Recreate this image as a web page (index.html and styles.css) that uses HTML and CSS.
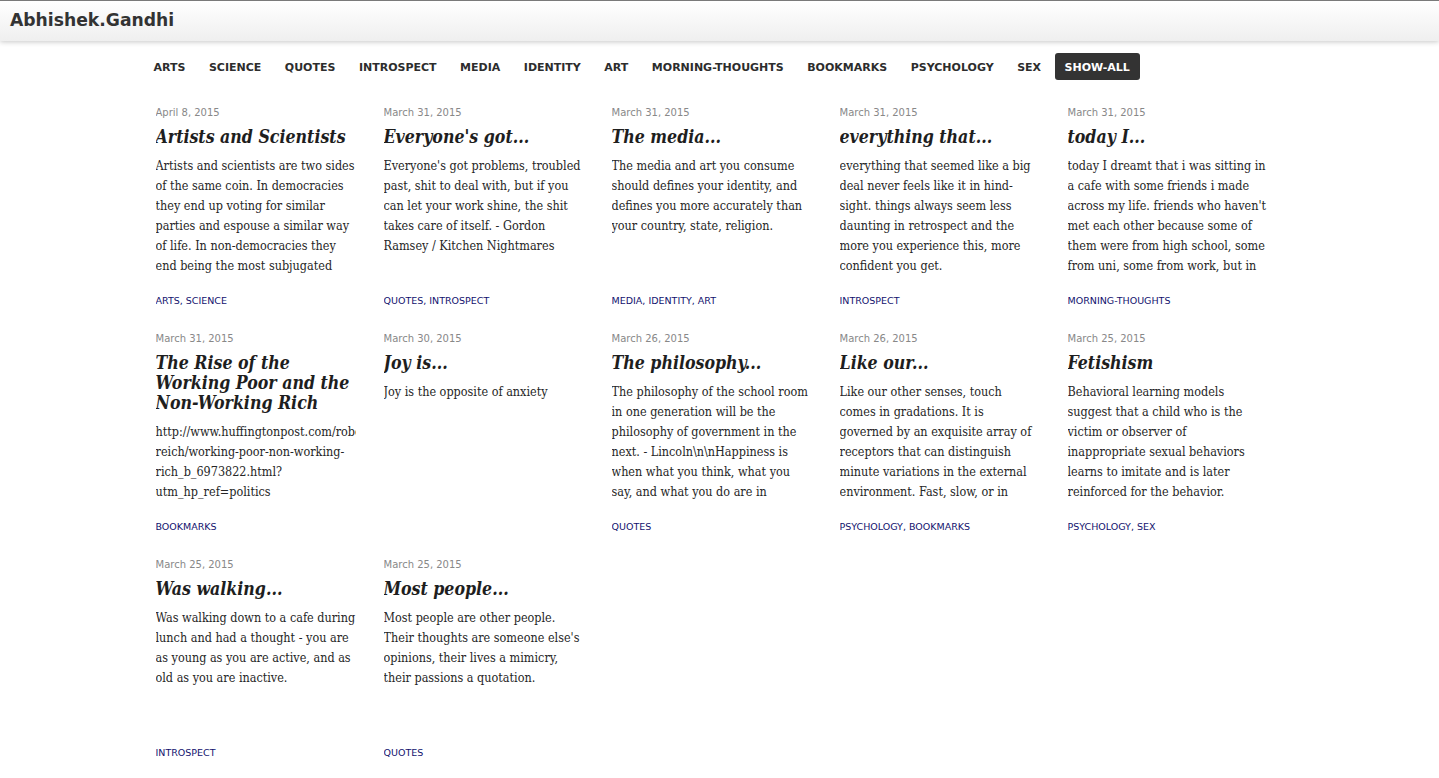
FILE: index.html
```html
<!DOCTYPE html>
<html>
<head>
<meta charset="utf-8">
<title>Abhishek.Gandhi</title>
<link rel="stylesheet" href="styles.css">
</head>
<body>
<header class="topbar">
  <a class="brand" href="#">Abhishek.Gandhi</a>
</header>
<div class="page">
  <nav class="tags-nav">
    <a class="tag-btn" href="#">ARTS</a>
    <a class="tag-btn" href="#">SCIENCE</a>
    <a class="tag-btn" href="#">QUOTES</a>
    <a class="tag-btn" href="#">INTROSPECT</a>
    <a class="tag-btn" href="#">MEDIA</a>
    <a class="tag-btn" href="#">IDENTITY</a>
    <a class="tag-btn" href="#">ART</a>
    <a class="tag-btn" href="#">MORNING-THOUGHTS</a>
    <a class="tag-btn" href="#">BOOKMARKS</a>
    <a class="tag-btn" href="#">PSYCHOLOGY</a>
    <a class="tag-btn" href="#">SEX</a>
    <a class="tag-btn active" href="#">SHOW-ALL</a>
  </nav>
  <main class="posts">
    <article class="post">
      <div class="post-content">
        <div class="date">April 8, 2015</div>
        <h2 class="title">Artists and Scientists</h2>
        <p class="body">Artists and scientists are two sides of the same coin. In democracies they end up voting for similar parties and espouse a similar way of life. In non-democracies they end being the most subjugated people in society.</p>
      </div>
      <div class="post-tags"><a href="#">ARTS</a>, <a href="#">SCIENCE</a></div>
    </article>
    <article class="post">
      <div class="post-content">
        <div class="date">March 31, 2015</div>
        <h2 class="title">Everyone's got...</h2>
        <p class="body">Everyone's got problems, troubled past, shit to deal with, but if you can let your work shine, the shit takes care of itself. - Gordon Ramsey / Kitchen Nightmares</p>
      </div>
      <div class="post-tags"><a href="#">QUOTES</a>, <a href="#">INTROSPECT</a></div>
    </article>
    <article class="post">
      <div class="post-content">
        <div class="date">March 31, 2015</div>
        <h2 class="title">The media...</h2>
        <p class="body">The media and art you consume should defines your identity, and defines you more accurately than your country, state, religion.</p>
      </div>
      <div class="post-tags"><a href="#">MEDIA</a>, <a href="#">IDENTITY</a>, <a href="#">ART</a></div>
    </article>
    <article class="post">
      <div class="post-content">
        <div class="date">March 31, 2015</div>
        <h2 class="title">everything that...</h2>
        <p class="body">everything that seemed like a big deal never feels like it in hind-sight. things always seem less daunting in retrospect and the more you experience this, more confident you get.</p>
      </div>
      <div class="post-tags"><a href="#">INTROSPECT</a></div>
    </article>
    <article class="post">
      <div class="post-content">
        <div class="date">March 31, 2015</div>
        <h2 class="title">today I...</h2>
        <p class="body">today I dreamt that i was sitting in a cafe with some friends i made across my life. friends who haven't met each other because some of them were from high school, some from uni, some from work, but in the dream they all knew each other.</p>
      </div>
      <div class="post-tags"><a href="#">MORNING-THOUGHTS</a></div>
    </article>
    <article class="post">
      <div class="post-content">
        <div class="date">March 31, 2015</div>
        <h2 class="title">The Rise of the Working Poor and the Non-Working Rich</h2>
        <p class="body">http://www.huffingtonpost.com/robert-reich/working-poor-non-working-rich_b_6973822.html?utm_hp_ref=politics</p>
      </div>
      <div class="post-tags"><a href="#">BOOKMARKS</a></div>
    </article>
    <article class="post">
      <div class="post-content">
        <div class="date">March 30, 2015</div>
        <h2 class="title">Joy is...</h2>
        <p class="body">Joy is the opposite of anxiety</p>
      </div>
      <div class="post-tags"></div>
    </article>
    <article class="post">
      <div class="post-content">
        <div class="date">March 26, 2015</div>
        <h2 class="title">The philosophy...</h2>
        <p class="body">The philosophy of the school room in one generation will be the philosophy of government in the next. - Lincoln\n\nHappiness is when what you think, what you say, and what you do are in harmony. - Gandhi</p>
      </div>
      <div class="post-tags"><a href="#">QUOTES</a></div>
    </article>
    <article class="post">
      <div class="post-content">
        <div class="date">March 26, 2015</div>
        <h2 class="title">Like our...</h2>
        <p class="body">Like our other senses, touch comes in gradations. It is governed by an exquisite array of receptors that can distinguish minute variations in the external environment. Fast, slow, or in between.</p>
      </div>
      <div class="post-tags"><a href="#">PSYCHOLOGY</a>, <a href="#">BOOKMARKS</a></div>
    </article>
    <article class="post">
      <div class="post-content">
        <div class="date">March 25, 2015</div>
        <h2 class="title">Fetishism</h2>
        <p class="body">Behavioral learning models suggest that a child who is the victim or observer of inappropriate sexual behaviors learns to imitate and is later reinforced for the behavior.</p>
      </div>
      <div class="post-tags"><a href="#">PSYCHOLOGY</a>, <a href="#">SEX</a></div>
    </article>
    <article class="post">
      <div class="post-content">
        <div class="date">March 25, 2015</div>
        <h2 class="title">Was walking...</h2>
        <p class="body">Was walking down to a cafe during lunch and had a thought - you are as young as you are active, and as old as you are inactive.</p>
      </div>
      <div class="post-tags"><a href="#">INTROSPECT</a></div>
    </article>
    <article class="post">
      <div class="post-content">
        <div class="date">March 25, 2015</div>
        <h2 class="title">Most people...</h2>
        <p class="body">Most people are other people. Their thoughts are someone else's opinions, their lives a mimicry, their passions a quotation.</p>
      </div>
      <div class="post-tags"><a href="#">QUOTES</a></div>
    </article>
  </main>
</div>
</body>
</html>
```

FILE: styles.css
```css
html, body {
  margin: 0;
  padding: 0;
  background: #fff;
}

body {
  font-family: "DejaVu Serif", serif;
  color: #333;
}

a {
  text-decoration: none;
}

.topbar {
  height: 40px;
  border-top: 1px solid #7a7a7a;
  background: linear-gradient(#ffffff, #efefef);
  box-shadow: 0 1px 5px rgba(0, 0, 0, 0.22);
  display: flex;
  align-items: center;
  padding-left: 10px;
  position: relative;
}

.brand {
  font-family: "DejaVu Sans", sans-serif;
  font-weight: bold;
  font-size: 17.2px;
  color: #333;
  margin-top: -3px;
}

.page {
  width: 1152px;
  margin: 0 auto;
}

.tags-nav {
  display: flex;
  gap: 3.5px;
  margin-top: 12px;
}

.tag-btn {
  font-family: "DejaVu Sans", sans-serif;
  font-weight: bold;
  font-size: 11px;
  color: #2d2d2d;
  height: 27px;
  line-height: 29px;
  padding: 0 10px;
  border-radius: 3px;
}

.tag-btn.active {
  background: #333;
  color: #fff;
}

.posts {
  display: grid;
  grid-template-columns: repeat(5, 200px);
  column-gap: 28px;
  grid-auto-rows: 226px;
  padding-left: 12px;
  margin-top: 26px;
}

.post {
  height: 201px;
  display: flex;
  flex-direction: column;
  overflow: hidden;
}

.post-content {
  flex: 1;
  min-height: 0;
  overflow: hidden;
}

.date {
  font-family: "DejaVu Sans", sans-serif;
  font-size: 10px;
  line-height: 14px;
  color: #888;
}

.title {
  font-family: "DejaVu Serif", serif;
  font-weight: bold;
  font-style: italic;
  font-stretch: condensed;
  font-size: 17.6px;
  line-height: 20px;
  color: #1e1e1e;
  margin: 7px 0 0;
}

.body {
  font-family: "DejaVu Serif", serif;
  font-stretch: condensed;
  font-size: 12.5px;
  line-height: 20px;
  color: #262626;
  margin: 9px 0 0;
}

.post-tags {
  flex: none;
  margin-top: 18px;
  font-family: "DejaVu Sans", sans-serif;
  font-size: 9.5px;
  line-height: 12px;
  height: 12px;
  color: #12126e;
  white-space: nowrap;
}

.post-tags a {
  color: #12126e;
}
```
